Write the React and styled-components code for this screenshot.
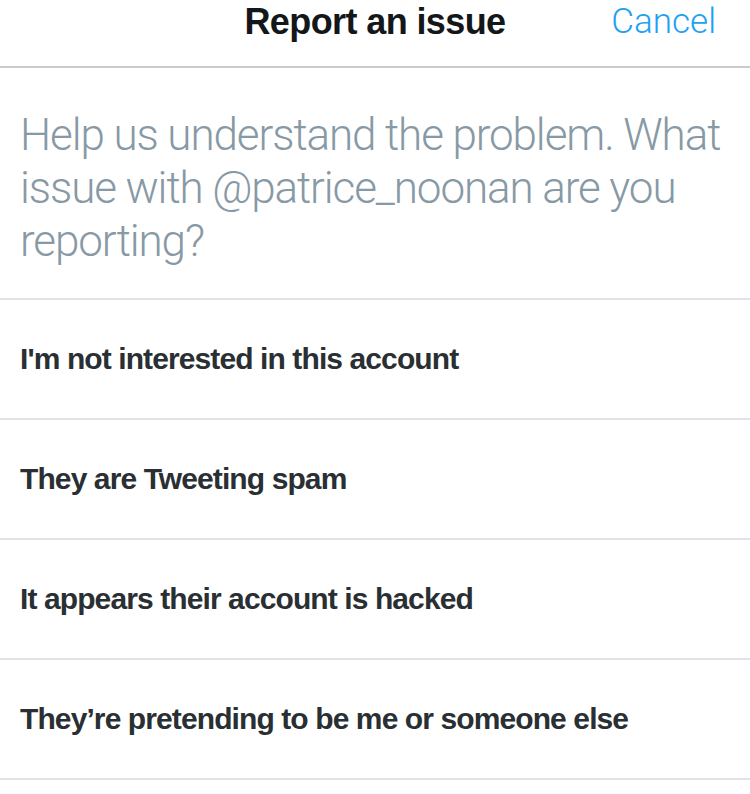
import React from "react";
import styled, { createGlobalStyle } from "styled-components";

const GlobalStyle = createGlobalStyle`
  body {
    margin: 0;
    background: #ffffff;
    font-family: "Liberation Sans", Arial, sans-serif;
  }
`;

const Screen = styled.div`
  width: 750px;
  height: 794px;
  overflow: hidden;
  background: #ffffff;
`;

const Header = styled.div`
  height: 66px;
  border-bottom: 2px solid #cbcbcd;
  display: flex;
  align-items: flex-start;
  justify-content: center;
  position: relative;
`;

const Title = styled.h1`
  margin: 0;
  font-family: "Liberation Sans", Arial, sans-serif;
  font-weight: 700;
  font-size: 36px;
  line-height: 44px;
  letter-spacing: -0.6px;
  color: #14171a;
`;

const Cancel = styled.button`
  position: absolute;
  right: 34px;
  top: 0;
  border: 0;
  padding: 0;
  background: none;
  font-family: "Roboto", "Liberation Sans", sans-serif;
  font-weight: 300;
  font-size: 35px;
  line-height: 44px;
  color: #1da1f2;
  cursor: pointer;
`;

const Question = styled.p`
  margin: 0;
  padding: 41px 20px 30px 20px;
  border-bottom: 2px solid #e1e3e6;
  font-family: "Roboto", "Liberation Sans", sans-serif;
  font-weight: 300;
  font-size: 44px;
  line-height: 53px;
  letter-spacing: -1.1px;
  color: #8899a6;
`;

const Option = styled.div`
  height: 118px;
  border-bottom: 2px solid #e1e3e6;
  display: flex;
  align-items: center;
  padding: 0 20px;
  font-family: "Liberation Sans", Arial, sans-serif;
  font-weight: 700;
  font-size: 30px;
  letter-spacing: -0.9px;
  color: #292f33;
  cursor: pointer;
`;

const options = [
  "I'm not interested in this account",
  "They are Tweeting spam",
  "It appears their account is hacked",
  "They\u2019re pretending to be me or someone else",
];

export default function App() {
  return (
    <Screen>
      <GlobalStyle />
      <Header>
        <Title>Report an issue</Title>
        <Cancel>Cancel</Cancel>
      </Header>
      <Question>
        Help us understand the problem. What issue with @patrice_noonan are you
        reporting?
      </Question>
      {options.map((o) => (
        <Option key={o}>{o}</Option>
      ))}
    </Screen>
  );
}
